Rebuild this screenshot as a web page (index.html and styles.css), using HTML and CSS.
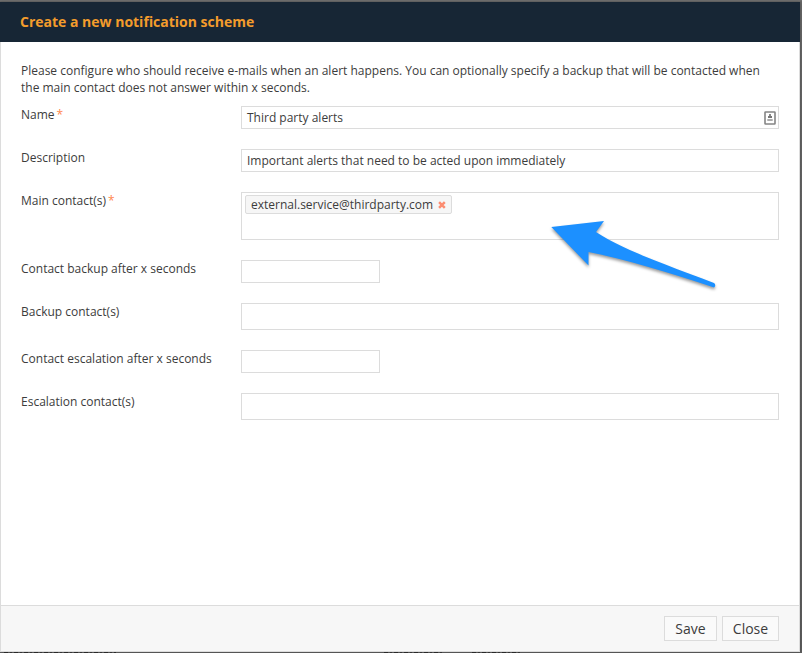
FILE: index.html
```html
<!DOCTYPE html>
<html lang="en">
<head>
<meta charset="utf-8">
<title>Create a new notification scheme</title>
<link rel="stylesheet" href="styles.css">
</head>
<body>
<div class="dialog">
  <header class="dialog-header"><h1>Create a new notification scheme</h1></header>
  <main class="dialog-body">
    <p class="intro">Please configure who should receive e-mails when an alert happens. You can optionally specify a backup that will be contacted when the main contact does not answer within x seconds.</p>
    <div class="row"><div class="label">Name<span class="req">*</span></div>
      <div class="field with-icon"><span>Third party alerts</span>
        <svg class="card-icon" width="12" height="14" viewBox="0 0 12 14"><rect x="1" y="1" width="10" height="12" rx=".5" fill="#fff" stroke="#858585" stroke-width="1.6"/><rect x="5" y="3" width="2" height="2" fill="#888"/><rect x="4" y="5" width="4" height="2" fill="#777"/><rect x="3.3" y="8" width="5.4" height="2" fill="#aaa"/></svg>
      </div></div>
    <div class="row"><div class="label">Description</div><div class="field">Important alerts that need to be acted upon immediately</div></div>
    <div class="row"><div class="label">Main contact(s)<span class="req">*</span></div>
      <div class="field tags"><span class="tag">external.service@thirdparty.com<svg width="8" height="8" viewBox="0 0 8 8"><path d="M1.1 1.1 6.9 6.9M6.9 1.1 1.1 6.9" stroke="#fc8c70" stroke-width="2.5"/></svg></span></div></div>
    <div class="row"><div class="label">Contact backup after x seconds</div><div class="field short"></div></div>
    <div class="row"><div class="label">Backup contact(s)</div><div class="field tall"></div></div>
    <div class="row"><div class="label">Contact escalation after x seconds</div><div class="field short"></div></div>
    <div class="row"><div class="label">Escalation contact(s)</div><div class="field tall"></div></div>
  </main>
  <footer class="dialog-footer"><button class="save">Save</button><button class="close">Close</button></footer>
</div>
<div class="backdrop-edge"><i class="strip first"></i><i class="strip second"></i><i class="strip third"></i></div>
<svg class="arrow" width="190" height="90" viewBox="0 0 190 90"><path d="M11.3 17 64 11 56 22C85 41 130 56 174 73Q176.500 75 174 77.5C130 63 85 49 48.500 42L48.500 55.500Z" fill="#1c90ff"/></svg>
</body>
</html>
```

FILE: styles.css
```css
* { box-sizing: border-box; }
body {
  margin: 0;
  width: 802px;
  height: 653px;
  overflow: hidden;
  padding-top: 2px;
  background: linear-gradient(#737373, #676767 2px, #5e5e5e);
  font: 12px/17px "Open Sans", sans-serif;
  color: #3c3c3c;
}
.dialog {
  width: 800px;
  height: 650px;
  display: flex;
  flex-direction: column;
  background: #fff;
  box-shadow: 0 0 3px rgba(0, 0, 0, .25);
}
.dialog-header {
  height: 40px;
  padding: 0 20px;
  display: flex;
  align-items: center;
  background: #172635;
}
.dialog-header h1 { margin: 0; font-size: 14px; line-height: 18px; color: #f39c2c; }
.dialog-body {
  flex: 1;
  padding: 20px 20px 0;
  border: solid #dcdcdc;
  border-width: 0 1px;
}
.intro { margin: 0 0 10px; }
.row { display: flex; margin-bottom: 20px; }
.label { width: 220px; }
.req { margin-left: 2px; color: #ff874d; }
.field {
  width: 538px;
  height: 23px;
  padding: 2px 5px;
  border: 1px solid #dcdcdc;
}
.with-icon { display: flex; justify-content: space-between; padding-right: 2px; }
.card-icon { margin-top: 2px; }
.short { width: 139px; }
.tall { height: 27px; }
.tags { height: 48px; padding: 2px 3px; }
.tag {
  display: flex;
  align-items: center;
  width: 207px;
  height: 19px;
  padding: 0 5px;
  border: 1px solid #dcdcdc;
  border-radius: 2px;
  background: #f6f6f6;
}
.tag svg { margin-left: 5px; }
.dialog-footer {
  height: 47px;
  padding: 10px 20px 0;
  display: flex;
  justify-content: flex-end;
  gap: 5px;
  background: #f7f7f7;
  border: 1px solid #dcdcdc;
}
button {
  height: 25px;
  padding: 0;
  border: 1px solid #dcdcdc;
  background: #fafafa;
  color: #3c3c3c;
  font: 14px/20px "Open Sans", sans-serif;
}
.save { width: 53px; }
.close { width: 57px; }
/* Dimmed table headings just under the dialog edge */
.backdrop-edge { display: flex; height: 1px; }
.strip {
  height: 1px;
  background: repeating-linear-gradient(90deg, #292929 0 4px, #505050 4px 6px, #333 6px 8px, #555 8px 10px);
}
.first { width: 112px; margin-left: 4px; }
.second { width: 60px; margin-left: 268px; }
.third { width: 50px; margin-left: 28px; }
.arrow {
  position: absolute;
  left: 540px;
  top: 210px;
  filter: drop-shadow(0 2px 1.5px rgba(0, 0, 0, .4));
}
```
